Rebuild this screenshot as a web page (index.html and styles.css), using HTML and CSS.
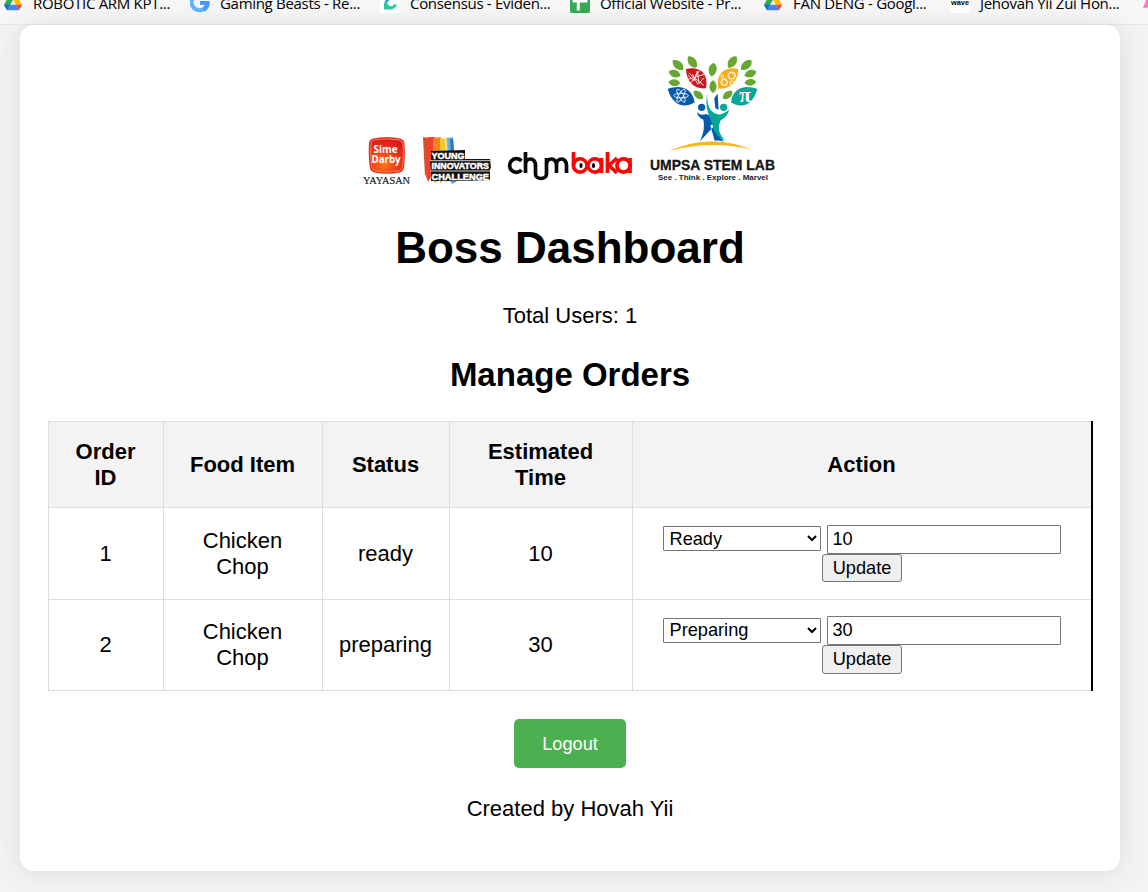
FILE: index.html
```html
<!DOCTYPE html>
<html lang="en">
<head>
<meta charset="utf-8">
<title>Boss Dashboard</title>
<link rel="stylesheet" href="styles.css">
</head>
<body>
<svg class="defs" width="0" height="0">
  <defs>
    <symbol id="drive" viewBox="0 0 20 18">
      <path d="M6.500 0h7L10 6z" fill="#188038"/>
      <path d="M6.500 0 0 11.500 3.400 17.500 10 6z" fill="#34a853"/>
      <path d="M13.500 0 20 11.500h-6.600L10 6 6.500 0z" fill="#fbbc04"/>
      <path d="M0 11.500h6.700L3.400 17.500z" fill="#1967d2"/>
      <path d="M6.700 11.500h6.600L16.600 17.500H3.400z" fill="#4285f4"/>
      <path d="M13.300 11.500H20L16.600 17.500z" fill="#ea4335"/>
    </symbol>
    <path id="leaf" d="M-21 0C-13-14 10-18 21 0 10 18-13 14-21 0z"/>
  </defs>
</svg>
<nav class="bookmarks">
  <a class="bookmark"><svg class="icon" viewBox="0 0 20 20"><use href="#drive" x="1" y="1" width="18" height="17"/></svg><span class="label">ROBOTIC ARM KPT...</span></a>
  <a class="bookmark"><svg class="icon" viewBox="0 0 20 20"><path d="M16 4.500A8 8 0 1 0 17.500 10H10" fill="none" stroke="#5eb1ff" stroke-width="4"/><path d="M10 10h7.500a8 8 0 0 1-4 7" fill="none" stroke="#4a9bff" stroke-width="4"/></svg><span class="label">Gaming Beasts - Re...</span></a>
  <a class="bookmark"><svg class="icon" viewBox="0 0 20 20"><path d="M0 0h20v20H0z" fill="#fff"/><path d="M14.500 6A5 5 0 0 0 6.500 9" fill="none" stroke="#2d9cf0" stroke-width="3"/><path d="M6 8.500a5 5 0 0 0 9.500 3" fill="none" stroke="#27c7a0" stroke-width="3"/><path d="M4 16.500V10l9 6.500z" fill="#27c7a0"/></svg><span class="label">Consensus - Eviden...</span></a>
  <a class="bookmark"><svg class="icon" viewBox="0 0 20 20"><rect width="20" height="20" rx="2" fill="#34a853"/><path d="M2.500 8h15M8.300 3v14.500" stroke="#fff" stroke-width="3"/></svg><span class="label">Official Website - Pr...</span></a>
  <a class="bookmark"><svg class="icon" viewBox="0 0 20 20"><use href="#drive" x="1" y="1" width="18" height="17"/></svg><span class="label">FAN DENG - Googl...</span></a>
  <a class="bookmark"><svg class="icon" viewBox="0 0 20 20"><path d="M0 0h20v20H0z" fill="#fff"/><text x="1" y="12" class="wave" textLength="18" lengthAdjust="spacingAndGlyphs">wave</text></svg><span class="label">Jehovah Yii Zui Hon...</span></a>
  <a class="bookmark"><svg class="icon" viewBox="0 0 20 20"><path d="M4 5 0 15l10-1z" fill="#ff73c0"/></svg></a>
</nav>
<main class="card">
  <div class="logos">
    <svg class="yayasan" viewBox="0 0 50 52">
      <defs><radialGradient id="flame" cx=".4" cy=".75" r=".75"><stop offset="0" stop-color="#ff7a16"/><stop offset=".55" stop-color="#f23b1c"/><stop offset="1" stop-color="#d91920"/></radialGradient></defs>
      <path d="M11 1.500q13.500-3 27 0 4 1 4.500 5 1 12-.5 24-.6 4-4.500 5-12.500 2.500-25 0-4-1-4.700-5-1.600-12-.8-24Q7.500 2.500 11 1.500z" fill="#e42b20"/>
      <path d="M12 3q12.500-2.500 25 0 3.500.8 4 4 .8 11-.5 23-.5 3-4 4-12 2.200-23 0-3.500-1-4-4-1.500-12-.6-23Q9.300 3.700 12 3z" fill="url(#flame)" stroke="#ffad55" stroke-width=".7"/>
      <text x="11.500" y="15.500" class="sime" textLength="24" lengthAdjust="spacingAndGlyphs">Sime</text>
      <text x="9.500" y="25.500" class="sime" textLength="29" lengthAdjust="spacingAndGlyphs">Darby</text>
      <text x="1" y="47" class="foundation" textLength="47" lengthAdjust="spacingAndGlyphs">YAYASAN</text>
    </svg>
    <svg class="young" viewBox="0 0 70 52">
      <path d="m1 1 6 1 1 35-3-3-2 7z" fill="#d94d35"/>
      <path d="M6 1h7l-1 43-3-3-3 5-2-6z" fill="#ef4129"/>
      <path d="m11 2 8-1 1 45-4-2-3 3-2-4z" fill="#f58220"/>
      <path d="m18 2 7 1-1 42-3-3-3 6z" fill="#fdc52e"/>
      <path d="m23 1 3 1 1 43-4 2z" fill="#e8df9b"/>
      <path d="m25 2 6-1 3 45-4 2-3-4z" fill="#63afe3"/>
      <path d="m28 3 3 0 4 42-4 1z" fill="#2b79be"/>
      <path d="M9 15l34-1v9h25l1 9-1 1v11l-24 1H9V34l-1-9h1z" fill="#111"/>
      <path d="M8 24.700h60M8 35h60" stroke="#fff" stroke-width=".8"/>
      <g class="graffiti">
        <text x="9.500" y="22.500" textLength="33" lengthAdjust="spacingAndGlyphs">YOUNG</text>
        <text x="9.500" y="33" textLength="57.500" lengthAdjust="spacingAndGlyphs">INNOVATORS</text>
        <text x="9.500" y="43.500" textLength="57.500" lengthAdjust="spacingAndGlyphs">CHALLENGE</text>
      </g>
    </svg>
    <svg class="chumbaka" viewBox="0 0 126 32">
      <g fill="none" stroke="#090909" stroke-width="3.700">
        <path d="M14.500 9A6.800 6.800 0 1 0 14.500 18"/>
        <path d="M18.500 0v21M18.500 13a5 6 0 0 1 10 0v9a5.500 4.500 0 0 0 11 0V6M39.500 13a5 6 0 0 1 10 0v8M49.500 13a5 6 0 0 1 10 0v8"/>
      </g>
      <g fill="none" stroke="#f80505" stroke-width="3.700">
        <path d="M66.500 0v14M94.500 6v15M100.500 0v21M110 6l-8 7.500 8 7.500M123 6v15"/>
        <circle cx="73" cy="13.500" r="6.600"/><circle cx="88" cy="13.500" r="6.600"/><circle cx="116.500" cy="13.500" r="6.600"/>
      </g>
      <circle cx="73.500" cy="13.500" r="4.700" fill="#fff"/><circle cx="87.500" cy="13.500" r="4.700" fill="#fff"/>
      <ellipse cx="74" cy="13.500" rx="1.600" ry="2.600"/><ellipse cx="86.500" cy="13.500" rx="1.600" ry="2.600"/>
    </svg>
    <svg class="stem" viewBox="0 0 140 140">
      <g transform="translate(15 3) scale(.3333)">
        <g fill="#68a832">
          <use href="#leaf" transform="translate(54 36) rotate(42)"/><use href="#leaf" transform="translate(97 27) rotate(55)"/><use href="#leaf" transform="translate(158 50) rotate(-80)"/><use href="#leaf" transform="translate(217 27) rotate(-55)"/><use href="#leaf" transform="translate(259 36) rotate(-42)"/>
          <use href="#leaf" transform="translate(44 62) rotate(20) scale(.9)"/><use href="#leaf" transform="translate(271 62) rotate(-20) scale(.9)"/><use href="#leaf" transform="translate(43 89) rotate(5) scale(.85)"/><use href="#leaf" transform="translate(271 88) rotate(-5) scale(.85)"/>
          <use href="#leaf" transform="translate(159 101) rotate(90) scale(.9)"/><use href="#leaf" transform="translate(115 126) rotate(38) scale(.85)"/><use href="#leaf" transform="translate(203 126) rotate(-38) scale(.85)"/>
        </g>
        <path d="M78 48C112 40 147 55 138 106 103 109 80 88 78 48z" fill="#ca1820"/>
        <path d="M235 48C200 40 166 57 175 107 211 109 233 88 235 48z" fill="#f9ad18"/>
        <path d="M23 108C59 94 97 104 104 148 69 169 37 155 23 108z" fill="#075aa9"/>
        <path d="M292 108C255 94 218 104 213 148 247 169 279 155 292 108z" fill="#05a79a"/>
        <g fill="none" stroke="#fff" stroke-width="2.500">
          <path d="m86 60 45 37M84 79l49-15M92 91l27-38M84 67l18 16 10-29 5 38 15-18M98 64l15 30"/>
          <circle cx="193" cy="88" r="9" stroke-width="5" stroke-dasharray="5 1.500"/><circle cx="215" cy="68" r="10" stroke-width="5" stroke-dasharray="5 1.500"/><circle cx="216" cy="90" r="6" stroke-width="3"/><circle cx="187" cy="70" r="4"/>
          <ellipse cx="63" cy="128" rx="22" ry="7"/><ellipse cx="63" cy="128" rx="22" ry="7" transform="rotate(60 63 128)"/><ellipse cx="63" cy="128" rx="22" ry="7" transform="rotate(120 63 128)"/>
        </g>
        <text x="238" y="148" class="pi" textLength="35" lengthAdjust="spacingAndGlyphs">π</text>
        <circle cx="125" cy="163" r="11" fill="#075aa9"/><circle cx="191" cy="163" r="11" fill="#05a79a"/>
        <path d="M111 177q8 13 28 6l20 10 7 26-7 4-39 42q17-38 10-65-16-7-19-21zM151 217l13 46q14-2 27 3-22-24-25-55zM163 135l10-13 3 48-10-4z" fill="#075aa9"/>
        <path d="M142 121q-3 56 31 63 19 2 35-15-5 23-27 34-14 31 15 61-36-18-40-55-24-45-14-88z" fill="#05a79a"/>
        <path d="M28 294q124-55 250-3-120-31-250 3z" fill="#fbb51c"/>
      </g>
      <text x="5" y="120" class="stem-title" textLength="125" lengthAdjust="spacingAndGlyphs">UMPSA STEM LAB</text>
      <text x="13" y="129.500" class="stem-tag" textLength="110" lengthAdjust="spacingAndGlyphs">See . Think . Explore . Marvel</text>
    </svg>
  </div>
  <h1 class="title">Boss Dashboard</h1>
  <p class="users">Total Users: 1</p>
  <h2 class="subtitle">Manage Orders</h2>
  <table class="orders">
    <colgroup><col class="c1"><col class="c2"><col class="c3"><col class="c4"><col></colgroup>
    <thead><tr class="head"><th>Order<br>ID</th><th>Food Item</th><th>Status</th><th>Estimated<br>Time</th><th>Action</th></tr></thead>
    <tbody>
      <tr class="first"><td>1</td><td>Chicken<br>Chop</td><td>ready</td><td>10</td><td><form class="action"><div class="fields"><select class="select"><option>Ready</option></select><input class="minutes" value="10"></div><button class="update" type="button">Update</button></form></td></tr>
      <tr class="second"><td>2</td><td>Chicken<br>Chop</td><td>preparing</td><td>30</td><td><form class="action"><div class="fields"><select class="select"><option>Preparing</option></select><input class="minutes" value="30"></div><button class="update" type="button">Update</button></form></td></tr>
    </tbody>
  </table>
  <button class="logout" type="button">Logout</button>
  <p class="credit">Created by Hovah Yii</p>
</main>
</body>
</html>
```
FILE: styles.css
```css
* { box-sizing: border-box; }
body { margin: 0; height: 892px; overflow: hidden; background: #f3f3f3; color: #000; font: 22px/26px "Liberation Sans", Arial, sans-serif; }
.defs { position: absolute; }
.bookmarks { height: 25px; overflow: hidden; background: #f7f7f7; border-bottom: 1px solid #e8e8e8; display: grid; grid-template-columns: 187px 190px 190px 193px 187px 193px 20px; padding-left: 3px; }
.bookmark { display: flex; gap: 10px; height: 20px; margin-top: -7px; white-space: nowrap; }
.icon { width: 20px; height: 20px; flex: none; }
.label { font: 15px/20px "Open Sans", "Noto Sans", sans-serif; letter-spacing: -.3px; }
.wave { font: bold 7px "Liberation Sans", sans-serif; }
.card { width: 1100px; height: 846px; margin: 0 0 0 20px; padding: 25px 28px 0; border-radius: 14px; background: #fff; box-shadow: 0 0 28px rgba(0,0,0,.1); display: flex; flex-direction: column; align-items: center; }
.logos { height: 140px; width: 100%; display: flex; align-items: flex-end; padding-left: 314px; }
.yayasan { width: 50px; height: 52px; margin-bottom: 1px; }
.young { width: 70px; height: 52px; margin: 0 0 2px 10px; }
.chumbaka { width: 126px; height: 32px; margin: 0 0 6px 15px; }
.stem { width: 140px; height: 140px; margin-left: 12px; }
.sime { font: bold 10.5px/1 "Open Sans", sans-serif; fill: #fff; }
.foundation { font: 10px "Liberation Serif", serif; fill: #222; stroke: #222; stroke-width: .2px; }
.graffiti { font: 900 9px "Liberation Sans", sans-serif; fill: #fff; stroke: #fff; stroke-width: .5px; }
.pi { font: bold 62px "Liberation Serif", serif; fill: #fff; }
.stem-title { font: bold 15px "Liberation Sans", sans-serif; fill: #151515; stroke: #151515; stroke-width: .3px; }
.stem-tag { font: bold 8px "Liberation Sans", sans-serif; fill: #222; }
.title { margin: 32px 0 0; font-size: 44px; line-height: 51px; }
.users { margin: 30px 0 0; }
.subtitle { margin: 26px 0 0; font-size: 33px; line-height: 39px; }
.orders { width: 1045px; margin-top: 27px; border-collapse: collapse; table-layout: fixed; border-right: 2px solid #000; }
.orders th, .orders td { padding: 0; border: 1px solid #ddd; text-align: center; vertical-align: middle; }
.orders th:last-child, .orders td:last-child { border-right: 2px solid #000; }
.orders th { background: #f3f3f3; }
.head { height: 86px; }
.first { height: 92px; }
.second { height: 91px; }
.c1 { width: 115px; }
.c2 { width: 159px; }
.c3 { width: 127px; }
.c4 { width: 183px; }
.action { margin: 0; display: flex; flex-direction: column; align-items: center; }
.fields { display: flex; gap: 6px; align-items: center; }
.select, .minutes, .update { font: 18.2px/21px "Liberation Sans", Arial, sans-serif; color: #000; border: 1px solid #767676; }
.select { width: 158px; height: 25px; margin-bottom: 2px; padding: 0 2px; background-color: #fff; border-radius: 1px; }
.minutes { width: 234px; height: 29px; padding: 1px 5px; border-radius: 1px; }
.update { width: 80px; height: 28px; padding: 1px 0 0 1px; background: #efefef; border-radius: 3px; }
.second .action { padding-bottom: 1px; }
.second .select { margin-bottom: 0; }
.second .update { height: 29px; }
.logout { width: 112px; height: 49px; margin-top: 28px; padding: 1px 0 0; flex: none; border: 0; border-radius: 5px; background: #4caf50; color: #fff; font: 18.2px "Liberation Sans", Arial, sans-serif; }
.credit { margin: 28px 0 0; }
```
